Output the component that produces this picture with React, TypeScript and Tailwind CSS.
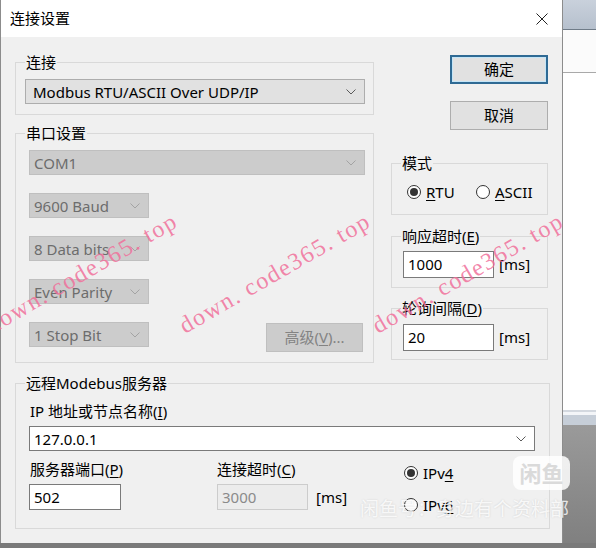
import React from "react";

const sans = "font-['Noto_Sans','Noto_Sans_CJK_SC',sans-serif]";

function Chevron({ disabled }: { disabled?: boolean }) {
  return (
    <svg width="10" height="6" viewBox="0 0 10 6" className="shrink-0">
      <path
        d="M0.5 0.5 L5 5 L9.5 0.5"
        fill="none"
        stroke={disabled ? "#a3a3a3" : "#5a5a5a"}
        strokeWidth="1"
      />
    </svg>
  );
}

type ComboKind = "button" | "disabled" | "edit";

function Combo({
  text,
  kind,
  className,
  padLeft = "pl-[4px]",
}: {
  text: string;
  kind: ComboKind;
  className: string;
  padLeft?: string;
}) {
  const look =
    kind === "button"
      ? "bg-[#e1e1e1] border-[#adadad] text-black"
      : kind === "disabled"
        ? "bg-[#cccccc] border-[#bfbfbf] text-[#6d6d6d]"
        : "bg-white border-[#7a7a7a] text-black";
  return (
    <div
      className={`flex items-center justify-between border pr-[8px] ${padLeft} ${look} ${className}`}
    >
      <span className="leading-[20px] whitespace-nowrap">{text}</span>
      <Chevron disabled={kind === "disabled"} />
    </div>
  );
}

function Group({
  label,
  className = "",
  children,
}: {
  label: React.ReactNode;
  className?: string;
  children: React.ReactNode;
}) {
  return (
    <fieldset className={`border border-[#d9d9d9] min-w-0 ${className}`}>
      <legend className="ml-[9px] px-[1px] leading-[19px] whitespace-nowrap">
        {label}
      </legend>
      {children}
    </fieldset>
  );
}

function Radio({ checked, children }: { checked?: boolean; children: React.ReactNode }) {
  return (
    <div className="flex items-center leading-[20px]">
      <span className="w-[14px] h-[14px] rounded-full border border-[#333333] bg-white flex items-center justify-center">
        {checked && <span className="w-[8px] h-[8px] rounded-full bg-[#333333]" />}
      </span>
      <span className="ml-[5px] whitespace-nowrap">{children}</span>
    </div>
  );
}

function Key({ children }: { children: React.ReactNode }) {
  return <span className="underline underline-offset-[2px]">{children}</span>;
}

function TextBox({ value, className, disabled }: { value: string; className: string; disabled?: boolean }) {
  return (
    <div
      className={`flex items-center pl-[4px] border ${
        disabled ? "bg-[#ececec] border-[#cccccc] text-[#8a8a8a]" : "bg-white border-[#7a7a7a] text-black"
      } ${className}`}
    >
      {value}
    </div>
  );
}

function Watermark({ left, top }: { left: string; top: string }) {
  return (
    <span
      className={`absolute ${left} ${top} origin-left rotate-[-30deg] whitespace-nowrap font-['Liberation_Serif',serif] text-[24px] leading-[28px] tracking-[1.5px] text-[#f0709b]/85`}
    >
      down. code365. top
    </span>
  );
}

export default function App() {
  return (
    <div className={`relative w-[596px] h-[548px] overflow-hidden bg-[#7c7c7c] flex flex-col text-[15px] text-black ${sans}`}>
      <div className="flex h-[543px]">
        {/* dialog */}
        <div className="w-[563px] h-full flex flex-col border-l border-r border-[#8c8c8c]">
          <div className="h-[37px] bg-white flex items-center justify-between">
            <span className="pl-[9px] text-[15px]">连接设置</span>
            <svg width="12" height="12" viewBox="0 0 12 12" className="mr-[14px]">
              <path d="M0.5 0.5 L11.5 11.5 M11.5 0.5 L0.5 11.5" stroke="#222" strokeWidth="1" />
            </svg>
          </div>

          <div className="flex-1 bg-[#f0f0f0] pl-[14px] pt-[16px] flex flex-col">
            <div className="flex gap-[17px]">
              {/* left column */}
              <div className="w-[359px] flex flex-col">
                <Group label="连接">
                  <div className="pl-[9px] pt-[7px] pb-[10px]">
                    <Combo
                      kind="button"
                      text="Modbus RTU/ASCII Over UDP/IP"
                      className="w-[340px] h-[25px]"
                      padLeft="pl-[7px]"
                    />
                  </div>
                </Group>

                <Group label="串口设置" className="mt-[9px]">
                  <div className="pl-[13px] pt-[7px] pb-[10px] flex flex-col gap-[18px]">
                    <Combo kind="disabled" text="COM1" className="w-[336px] h-[25px]" />
                    <Combo kind="disabled" text="9600 Baud" className="w-[120px] h-[25px]" />
                    <Combo kind="disabled" text="8 Data bits" className="w-[120px] h-[25px]" />
                    <Combo kind="disabled" text="Even Parity" className="w-[120px] h-[25px]" />
                    <div className="flex items-start">
                      <Combo kind="disabled" text="1 Stop Bit" className="w-[120px] h-[25px]" />
                      <div className="ml-[117px] mt-[1px] w-[97px] h-[29px] bg-[#cccccc] border border-[#bfbfbf] text-[#838383] flex items-center justify-center">
                        高级(<Key>V</Key>)...
                      </div>
                    </div>
                  </div>
                </Group>
              </div>

              {/* right column */}
              <div className="w-[157px] flex flex-col">
                <div className="flex flex-col items-end">
                  <div className="mt-[2px] w-[98px] h-[29px] bg-[#e1e1e1] border-2 border-[#2f6a94] shadow-[inset_0_0_0_1px_#c4e5f7] flex items-center justify-center">
                    确定
                  </div>
                  <div className="mt-[17px] w-[98px] h-[29px] bg-[#e1e1e1] border border-[#adadad] flex items-center justify-center">
                    取消
                  </div>
                </div>

                <Group label="模式" className="mt-[24px]">
                  <div className="pl-[15px] pt-[9px] pb-[12px] flex items-center">
                    <div className="w-[69px]">
                      <Radio checked>
                        <Key>R</Key>TU
                      </Radio>
                    </div>
                    <Radio>
                      <Key>A</Key>SCII
                    </Radio>
                  </div>
                </Group>

                <Group
                  label={
                    <>
                      响应超时(<Key>E</Key>)
                    </>
                  }
                  className="mt-[12px]"
                >
                  <div className="pl-[11px] pt-[5px] pb-[9px] flex items-center">
                    <TextBox value="1000" className="w-[91px] h-[27px]" />
                    <span className="ml-[5px]">[ms]</span>
                  </div>
                </Group>

                <Group
                  label={
                    <>
                      轮询间隔(<Key>D</Key>)
                    </>
                  }
                  className="mt-[11px]"
                >
                  <div className="pl-[11px] pt-[6px] pb-[8px] flex items-center">
                    <TextBox value="20" className="w-[91px] h-[27px]" />
                    <span className="ml-[5px]">[ms]</span>
                  </div>
                </Group>
              </div>
            </div>

            {/* remote server */}
            <Group label="远程Modebus服务器" className="mt-[11px] w-[535px]">
              <div className="pl-[14px] pt-[8px] pb-[13px] flex flex-col">
                <div className="leading-[20px]">
                  IP 地址或节点名称(<Key>I</Key>)
                </div>
                <Combo kind="edit" text="127.0.0.1" className="mt-[5px] -ml-[1px] w-[506px] h-[25px]" />
                <div className="mt-[8px] flex">
                  <div className="w-[187px] flex flex-col">
                    <div className="leading-[20px]">
                      服务器端口(<Key>P</Key>)
                    </div>
                    <TextBox value="502" className="mt-[5px] -ml-[1px] w-[92px] h-[26px]" />
                  </div>
                  <div className="w-[187px] flex flex-col">
                    <div className="leading-[20px]">
                      连接超时(<Key>C</Key>)
                    </div>
                    <div className="mt-[5px] flex items-center">
                      <TextBox value="3000" disabled className="w-[91px] h-[26px]" />
                      <span className="ml-[8px]">[ms]</span>
                    </div>
                  </div>
                  <div className="pt-[4px] flex flex-col gap-[12px]">
                    <Radio checked>
                      IPv<Key>4</Key>
                    </Radio>
                    <Radio>
                      IPv<Key>6</Key>
                    </Radio>
                  </div>
                </div>
              </div>
            </Group>
          </div>
        </div>

        {/* background window to the right */}
        <div className="flex-1 flex flex-col">
          <div className="h-[29px] bg-gradient-to-b from-[#c9d1dc] to-[#b6c0cd]" />
          <div className="h-[1px] bg-[#6f7b88]" />
          <div className="h-[42px] bg-[#fbfbfb]" />
          <div className="h-[1px] bg-[#a9a9a9]" />
          <div className="h-[337px] bg-white" />
          <div className="h-[2px] bg-[#d3d8df]" />
          <div className="h-[3px] bg-[#f3f5f8]" />
          <div className="h-[10px] bg-[#c6ced8]" />
          <div className="flex-1 bg-gradient-to-b from-[#9a9a9a] to-[#808080]" />
        </div>
      </div>
      <div className="flex-1 bg-[#7a7a7a]" />

      {/* watermarks */}
      <div className="pointer-events-none absolute inset-0">
        <Watermark left="left-[-12px]" top="top-[313px]" />
        <Watermark left="left-[181px]" top="top-[313px]" />
        <Watermark left="left-[374px]" top="top-[313px]" />
        <div className="absolute left-[513px] top-[456px] w-[57px] h-[34px] rounded-[8px] bg-white/85 flex items-center justify-center text-[22px] font-bold text-[#dadada]">
          闲鱼
        </div>
        <div className="absolute left-[360px] top-[497px] text-[19px] leading-[24px] text-white/80 whitespace-nowrap [text-shadow:0_0_2px_rgba(0,0,0,0.15)]">
          闲鱼号：身边有个资料部
        </div>
      </div>
    </div>
  );
}
